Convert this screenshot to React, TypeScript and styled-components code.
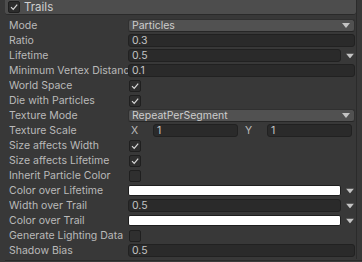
import { FunctionComponent, ReactNode } from "react";
import styled, { createGlobalStyle } from 'styled-components';

const GlobalStyle = createGlobalStyle`
	html, body {
		margin: 0;
		padding: 0;
		background: #383838;
	}
`

const Page = styled.div`
	width: 362px;
	height: 262px;
	overflow: hidden;
	background: #383838;
	font-family: Inter, "Noto Sans", "Liberation Sans", sans-serif;
	font-size: 10.5px;
	color: #bababa;
	padding-left: 5px;
	box-sizing: border-box;
`

const Module = styled.div`
	width: 352px;
	border-right: 1px solid #2b2b2b;
	box-sizing: border-box;
`

const Header = styled.div`
	height: 14px;
	display: flex;
	align-items: center;
	gap: 4px;
	padding-left: 2px;
	background: #4d4d4d;
	border-bottom: 1px solid #2a2a2a;
	border-radius: 0 0 3px 3px;
	font-size: 11.5px;
	color: #d0d0d0;
`

const Body = styled.div`
	padding: 3px 1px 1px 4px;
`

const Row = styled.div`
	display: grid;
	grid-template-columns: 119px 1fr;
	align-items: center;
	height: 15px;
`

const Label = styled.div`
	white-space: nowrap;
	overflow: hidden;
	line-height: 15px;
`

const Field = styled.div<{ $outerArrow?: boolean }>`
	height: 13px;
	box-sizing: border-box;
	background: #2a2a2a;
	border: 1px solid #212121;
	border-radius: 3px;
	padding-left: 3px;
	line-height: 11px;
	color: #c4c4c4;
	margin-right: ${props => props.$outerArrow ? '14px' : '0'};
`

const Dropdown = styled.div`
	height: 13px;
	box-sizing: border-box;
	display: flex;
	align-items: center;
	justify-content: space-between;
	background: #515151;
	border: 1px solid #303030;
	border-bottom-color: #262626;
	border-radius: 3px;
	padding: 0 4px 0 3px;
	color: #cdcdcd;
`

const Swatch = styled.div`
	height: 11px;
	box-sizing: border-box;
	background: #ffffff;
	border: 1px solid #1e1e1e;
	border-radius: 2px;
	margin-right: 14px;
`

const WithArrow = styled.div`
	position: relative;
`

const OuterArrow = styled.div`
	position: absolute;
	right: 1px;
	top: 50%;
	transform: translateY(-50%);
	display: flex;
`

const Box = styled.div<{ $header?: boolean }>`
	width: 12px;
	height: 12px;
	box-sizing: border-box;
	background: ${props => props.$header ? '#2c2c2c' : '#2f2f2f'};
	border: 1px solid #1f1f1f;
	border-radius: 2px;
	display: flex;
	align-items: center;
	justify-content: center;
	margin-left: 1px;
`

const Vector = styled.div`
	display: grid;
	grid-template-columns: 25px 85px 29px 85px;
	align-items: center;
`

const Axis = styled.span<{ $inset?: number }>`
	padding-left: ${props => props.$inset ?? 3}px;
`

const NextHeader = styled.div`
	height: 10px;
	margin-top: 1px;
	background: #3c3c3c;
	border-top: 1px solid #2a2a2a;
	padding: 2px 0 0 5px;
`

const Arrow = () => (
	<svg width="8" height="5" viewBox="0 0 8 5">
		<polygon points="0,0 8,0 4,5" fill="#c4c4c4" />
	</svg>
)

const Check = () => (
	<svg width="10" height="10" viewBox="0 0 10 10">
		<polyline points="2,5.2 4.2,7.4 8.2,2.6" fill="none" stroke="#d8d8d8" strokeWidth="1.2" />
	</svg>
)

const Checkbox: FunctionComponent<{ checked?: boolean, header?: boolean }> = (props) => (
	<Box $header={props.header}>{props.checked && <Check />}</Box>
)

const Prop: FunctionComponent<{ label: string, children?: ReactNode }> = (props) => (
	<Row>
		<Label>{props.label}</Label>
		<div>{props.children}</div>
	</Row>
)

const ArrowField: FunctionComponent<{ children: ReactNode }> = (props) => (
	<WithArrow>
		{props.children}
		<OuterArrow><Arrow /></OuterArrow>
	</WithArrow>
)

const App = () => (
	<Page>
		<GlobalStyle />
		<Module>
			<Header>
				<Checkbox checked header />
				<span>Trails</span>
			</Header>
			<Body>
				<Prop label="Mode"><Dropdown><span>Particles</span><Arrow /></Dropdown></Prop>
				<Prop label="Ratio"><Field>0.3</Field></Prop>
				<Prop label="Lifetime"><ArrowField><Field $outerArrow>0.5</Field></ArrowField></Prop>
				<Prop label="Minimum Vertex Distance"><Field>0.1</Field></Prop>
				<Prop label="World Space"><Checkbox checked /></Prop>
				<Prop label="Die with Particles"><Checkbox checked /></Prop>
				<Prop label="Texture Mode"><Dropdown><span>RepeatPerSegment</span><Arrow /></Dropdown></Prop>
				<Prop label="Texture Scale">
					<Vector>
						<Axis>X</Axis>
						<Field>1</Field>
						<Axis $inset={7}>Y</Axis>
						<Field>1</Field>
					</Vector>
				</Prop>
				<Prop label="Size affects Width"><Checkbox checked /></Prop>
				<Prop label="Size affects Lifetime"><Checkbox checked /></Prop>
				<Prop label="Inherit Particle Color"><Checkbox /></Prop>
				<Prop label="Color over Lifetime"><ArrowField><Swatch /></ArrowField></Prop>
				<Prop label="Width over Trail"><ArrowField><Field $outerArrow>0.5</Field></ArrowField></Prop>
				<Prop label="Color over Trail"><ArrowField><Swatch /></ArrowField></Prop>
				<Prop label="Generate Lighting Data"><Checkbox /></Prop>
				<Prop label="Shadow Bias"><Field>0.5</Field></Prop>
			</Body>
		</Module>
		<NextHeader><Checkbox header /></NextHeader>
	</Page>
)

export default App;
